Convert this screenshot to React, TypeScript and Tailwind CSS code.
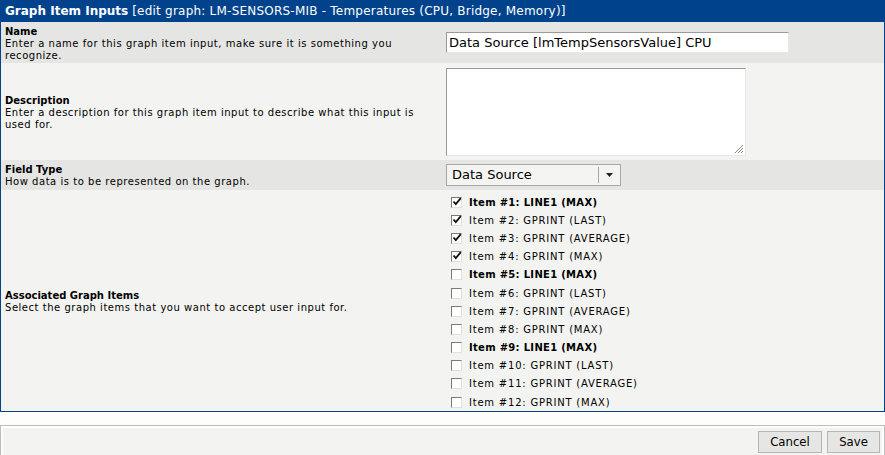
import React from "react";

const items: { label: string; bold: boolean; checked: boolean }[] = [
  { label: "Item #1: LINE1 (MAX)", bold: true, checked: true },
  { label: "Item #2: GPRINT (LAST)", bold: false, checked: true },
  { label: "Item #3: GPRINT (AVERAGE)", bold: false, checked: true },
  { label: "Item #4: GPRINT (MAX)", bold: false, checked: true },
  { label: "Item #5: LINE1 (MAX)", bold: true, checked: false },
  { label: "Item #6: GPRINT (LAST)", bold: false, checked: false },
  { label: "Item #7: GPRINT (AVERAGE)", bold: false, checked: false },
  { label: "Item #8: GPRINT (MAX)", bold: false, checked: false },
  { label: "Item #9: LINE1 (MAX)", bold: true, checked: false },
  { label: "Item #10: GPRINT (LAST)", bold: false, checked: false },
  { label: "Item #11: GPRINT (AVERAGE)", bold: false, checked: false },
  { label: "Item #12: GPRINT (MAX)", bold: false, checked: false },
];

function Check({ checked }: { checked: boolean }) {
  return (
    <span className="relative inline-block shrink-0 w-[11px] h-[11px] bg-white border-t border-l border-[#7a7a7a] border-r border-b border-r-[#e0e0e0] border-b-[#e0e0e0]">
      {checked && (
        <svg className="absolute left-[0px] top-[-1px]" width="10" height="10" viewBox="0 0 10 10">
          <path d="M1.5 4.5 L3.8 7.2 L8.8 1.2" fill="none" stroke="#111" strokeWidth="1.8" />
        </svg>
      )}
    </span>
  );
}

function Label({ title, desc }: { title: string; desc: React.ReactNode }) {
  return (
    <div className="text-[10px] leading-[12px] text-black pt-[2px]">
      <div className="font-bold">{title}</div>
      <div className="tracking-[0.53px]">{desc}</div>
    </div>
  );
}

export default function App() {
  return (
    <div className="w-[885px] h-[455px] bg-[#fdfdfb] font-['DejaVu_Sans',sans-serif] overflow-hidden">
      <div className="border border-[#00438c] border-t-0">
        <div className="h-[22px] bg-[#00438c] text-white text-[12px] flex items-center pl-[4px]">
          <span className="font-bold">Graph Item Inputs</span>
          <span className="ml-[4px] tracking-[0.22px]">[edit graph: LM-SENSORS-MIB - Temperatures (CPU, Bridge, Memory)]</span>
        </div>

        <div className="flex h-[41px] bg-[#e5e6e3]">
          <div className="w-[445px] pl-[4px] flex items-center">
            <Label
              title="Name"
              desc={
                <>
                  Enter a name for this graph item input, make sure it is something you
                  <br />
                  recognize.
                </>
              }
            />
          </div>
          <div className="flex items-center">
            <div className="w-[343px] h-[21px] bg-white border-t border-l border-[#9a9a9a] border-r border-b border-r-[#e8e8e8] border-b-[#e8e8e8] flex items-center pl-[2px] text-[13px] text-black">
              Data Source [lmTempSensorsValue] CPU
            </div>
          </div>
        </div>

        <div className="flex h-[97px] bg-[#f3f4f1]">
          <div className="w-[445px] pl-[4px] flex items-center">
            <Label
              title="Description"
              desc={
                <>
                  Enter a description for this graph item input to describe what this input is
                  <br />
                  used for.
                </>
              }
            />
          </div>
          <div className="flex items-center">
            <div className="relative w-[300px] h-[88px] bg-white border-t border-l border-[#9a9a9a] border-r border-b border-r-[#e8e8e8] border-b-[#e8e8e8]">
              <svg className="absolute right-[1px] bottom-[1px]" width="11" height="11" viewBox="0 0 11 11">
                <path d="M10 2 L2 10 M10 5 L5 10 M10 8 L8 10" stroke="#888" strokeWidth="1" />
              </svg>
            </div>
          </div>
        </div>

        <div className="flex h-[30px] bg-[#e5e6e3]">
          <div className="w-[445px] pl-[4px] flex items-center">
            <Label title="Field Type" desc="How data is to be represented on the graph." />
          </div>
          <div className="flex items-center">
            <div className="w-[175px] h-[22px] bg-[#f4f4f2] border border-[#a8a8a8] flex items-center text-[13px] text-black">
              <span className="flex-1 pl-[5px]">Data Source</span>
              <span className="w-px h-[16px] bg-[#a8a8a8]" />
              <span className="w-[21px] flex items-center justify-center">
                <svg width="7" height="4" viewBox="0 0 7 4">
                  <path d="M0 0 H7 L3.5 4 Z" fill="#222" />
                </svg>
              </span>
            </div>
          </div>
        </div>

        <div className="flex h-[221px] bg-[#f3f4f1]">
          <div className="w-[445px] pl-[4px] flex items-center">
            <Label title="Associated Graph Items" desc="Select the graph items that you want to accept user input for." />
          </div>
          <div className="pt-[3px] pl-[5px]">
            {items.map((it) => (
              <div key={it.label} className="h-[18.2px] flex items-center">
                <Check checked={it.checked} />
                <span
                  className={
                    "ml-[7px] text-[10px] text-black whitespace-nowrap " +
                    (it.bold ? "font-bold tracking-[0.3px]" : "tracking-[0.78px]")
                  }
                >
                  {it.label}
                </span>
              </div>
            ))}
          </div>
        </div>
      </div>

      <div className="mt-[13px] border border-[#bdbdbd] p-[2px]">
        <div className="h-[28px] bg-[#f3f4f1] flex items-center justify-end gap-[5px] pr-[2px] font-['DejaVu_Sans_Condensed',sans-serif] text-[13px]">
          <button className="h-[22px] w-[64px] bg-[#e6e7e4] border border-[#b5b5b5] text-black">Cancel</button>
          <button className="h-[22px] w-[53px] bg-[#e6e7e4] border border-[#b5b5b5] text-black">Save</button>
        </div>
      </div>
    </div>
  );
}
